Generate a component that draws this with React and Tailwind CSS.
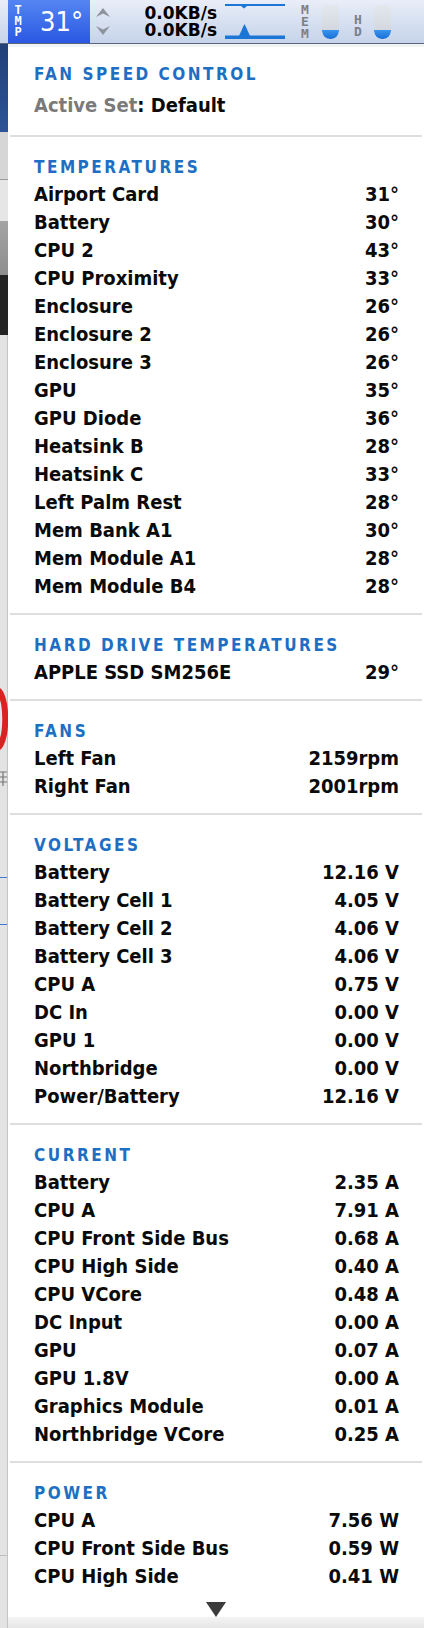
import React from "react";

const sections = [
  {
    title: "TEMPERATURES",
    rows: [
      ["Airport Card", "31°"],
      ["Battery", "30°"],
      ["CPU 2", "43°"],
      ["CPU Proximity", "33°"],
      ["Enclosure", "26°"],
      ["Enclosure 2", "26°"],
      ["Enclosure 3", "26°"],
      ["GPU", "35°"],
      ["GPU Diode", "36°"],
      ["Heatsink B", "28°"],
      ["Heatsink C", "33°"],
      ["Left Palm Rest", "28°"],
      ["Mem Bank A1", "30°"],
      ["Mem Module A1", "28°"],
      ["Mem Module B4", "28°"],
    ],
  },
  {
    title: "HARD DRIVE TEMPERATURES",
    rows: [["APPLE SSD SM256E", "29°"]],
  },
  {
    title: "FANS",
    rows: [
      ["Left Fan", "2159rpm"],
      ["Right Fan", "2001rpm"],
    ],
  },
  {
    title: "VOLTAGES",
    rows: [
      ["Battery", "12.16 V"],
      ["Battery Cell 1", "4.05 V"],
      ["Battery Cell 2", "4.06 V"],
      ["Battery Cell 3", "4.06 V"],
      ["CPU A", "0.75 V"],
      ["DC In", "0.00 V"],
      ["GPU 1", "0.00 V"],
      ["Northbridge", "0.00 V"],
      ["Power/Battery", "12.16 V"],
    ],
  },
  {
    title: "CURRENT",
    rows: [
      ["Battery", "2.35 A"],
      ["CPU A", "7.91 A"],
      ["CPU Front Side Bus", "0.68 A"],
      ["CPU High Side", "0.40 A"],
      ["CPU VCore", "0.48 A"],
      ["DC Input", "0.00 A"],
      ["GPU", "0.07 A"],
      ["GPU 1.8V", "0.00 A"],
      ["Graphics Module", "0.01 A"],
      ["Northbridge VCore", "0.25 A"],
    ],
  },
  {
    title: "POWER",
    rows: [
      ["CPU A", "7.56 W"],
      ["CPU Front Side Bus", "0.59 W"],
      ["CPU High Side", "0.41 W"],
    ],
  },
];

function Gauge() {
  return (
    <div className="w-[17px] h-[34px] rounded-t-[4px] rounded-b-[8px] bg-gradient-to-b from-[#e4e8ee] to-[#cdd2da] flex flex-col justify-end overflow-hidden">
      <div className="h-[9px] rounded-b-[8px] bg-gradient-to-b from-[#3a93ee] to-[#1570d6]"></div>
    </div>
  );
}

function StackedLetters({ letters, className }) {
  return (
    <div className={"flex flex-col items-center font-['DejaVu_Sans_Mono',monospace] font-bold " + className}>
      {letters.map((l, i) => (
        <span key={i}>{l}</span>
      ))}
    </div>
  );
}

function MenuBar() {
  return (
    <div className="h-[44px] flex items-stretch bg-gradient-to-b from-[#e9eef8] to-[#c6d3ea] border-b-[1px] border-[#5a6679]">
      <div className="w-[8px]"></div>

      {/* TMP item */}
      <div className="w-[82px] flex items-center bg-gradient-to-b from-[#5585f2] to-[#2a57e2] text-white">
        <StackedLetters letters={["T", "M", "P"]} className="ml-[6px] w-[8px] text-white text-[12px] leading-[11px]" />
        <span className="ml-[18px] text-[27px] leading-none">31°</span>
      </div>

      {/* up / down arrows */}
      <div className="ml-[6px] w-[14px] flex flex-col justify-center gap-[7px]">
        <svg width="14" height="11" viewBox="0 0 14 11">
          <path d="M0 10 L7 1 L14 10 L7 6.5 Z" fill="#8d939c" />
        </svg>
        <svg width="14" height="11" viewBox="0 0 14 11">
          <path d="M0 1 L7 4.5 L14 1 L7 10 Z" fill="#8d939c" />
        </svg>
      </div>

      {/* network speed */}
      <div className="ml-[32px] w-[75px] flex flex-col justify-center items-end font-['DejaVu_Sans',sans-serif] font-bold text-[17px] leading-[17px] text-black">
        <span>0.0KB/s</span>
        <span>0.0KB/s</span>
      </div>

      {/* network graph */}
      <svg className="ml-[8px]" width="61" height="43" viewBox="0 0 61 43">
        <rect x="0" y="4" width="60" height="2" fill="#1c76d6" />
        <path d="M16 6 L19 8.5 L22 6 Z" fill="#1c76d6" />
        <rect x="0" y="35.5" width="60" height="3.5" fill="#1c76d6" />
        <path d="M14 36 L18 27 L19.5 24 L21 27 L25 36 Z" fill="#1c76d6" />
      </svg>

      {/* MEM */}
      <StackedLetters letters={["M", "E", "M"]} className="ml-[13px] w-[12px] justify-center text-[#7c8086] text-[13px] leading-[12px]" />
      <div className="ml-[11px] flex items-center">
        <Gauge />
      </div>

      {/* HD */}
      <div className="ml-[13px] flex flex-col justify-end pb-[5px]">
        <StackedLetters letters={["H", "D"]} className="w-[12px] text-[#7c8086] text-[13px] leading-[12px]" />
      </div>
      <div className="ml-[10px] flex items-center">
        <Gauge />
      </div>
    </div>
  );
}

function LeftStrip() {
  return (
    <div className="w-[8px] flex flex-col overflow-hidden">
      <div className="h-[88px] bg-gradient-to-b from-[#223f78] to-[#2c5496]"></div>
      <div className="h-[47px] bg-[#d6d6d6]"></div>
      <div className="h-[1px] bg-[#9a9a9a]"></div>
      <div className="h-[41px] bg-[#e6e6e6]"></div>
      <div className="h-[54px] bg-gradient-to-b from-[#a3a3a3] to-[#8f8f8f]"></div>
      <div className="h-[60px] bg-[#242424]"></div>
      <div className="flex-1 flex flex-col bg-[#e3e3e3] border-r-[1px] border-[#c4c4c4]">
        <div className="h-[353px]"></div>
        <svg width="8" height="62" viewBox="0 0 8 62">
          <path d="M0 0 C11 8 11 54 0 62 L0 50 C3 42 3 20 0 12 Z" fill="#d92222" />
        </svg>
        <svg width="8" height="45" viewBox="0 0 8 45">
          <path d="M0 22 H7 M0 27 H7 M0 32 H7 M3 22 V36" stroke="#777" strokeWidth="1.2" fill="none" />
        </svg>
        <div className="h-[82px]"></div>
        <div className="h-[1px] bg-[#3d7ad8]"></div>
        <div className="h-[46px]"></div>
        <div className="h-[1px] bg-[#3d7ad8]"></div>
        <div className="h-[630px]"></div>
        <div className="h-[1px] bg-[#bcbcbc]"></div>
        <div className="flex-1"></div>
      </div>
    </div>
  );
}

function Divider() {
  return (
    <div className="h-[28px] flex items-center px-[2px]">
      <div className="h-[2px] w-full bg-[#dedede]"></div>
    </div>
  );
}

function Heading({ children }) {
  return (
    <div className="h-[30px] flex items-center pt-[5px] pl-[26px] text-[17px] font-bold tracking-[2.5px] text-[#1e6fc3]">
      {children}
    </div>
  );
}

function Row({ label, value }) {
  return (
    <div className="h-[28px] flex items-center justify-between pl-[26px] pr-[25px] text-[20px] font-bold text-[#0a0a0a] leading-[28px]">
      <span>{label}</span>
      <span>{value}</span>
    </div>
  );
}

export default function App() {
  return (
    <div className="w-[424px] h-[1628px] overflow-hidden flex flex-col bg-white font-['DejaVu_Sans_Condensed','DejaVu_Sans',sans-serif]">
      <MenuBar />
      <div className="flex flex-1 min-h-0">
        <LeftStrip />
        <div className="flex-1 flex flex-col bg-white">
          <div className="h-[8px] bg-[#f2f3f5]"></div>

          {/* Fan speed control */}
          <div className="mt-[10px]">
            <Heading>FAN SPEED CONTROL</Heading>
          </div>
          <div className="mt-[4px] mb-[3px] h-[28px] flex items-center pl-[26px] text-[20px] font-bold">
            <span className="text-[#7a7a7a]">Active Set</span>
            <span className="text-[#0a0a0a]">: Default</span>
          </div>

          {sections.map((s) => (
            <div key={s.title}>
              <Divider />
              <Heading>{s.title}</Heading>
              {s.rows.map(([label, value], i) => (
                <Row key={i} label={label} value={value} />
              ))}
            </div>
          ))}

          {/* scroll arrow */}
          <div className="flex-1 flex flex-col">
            <div className="flex-1 flex justify-center pt-[12px]">
              <svg width="20" height="15" viewBox="0 0 20 15">
                <path d="M0 0 L20 0 L10 15 Z" fill="#3b3b3b" />
              </svg>
            </div>
            <div className="h-[11px] bg-gradient-to-b from-[#f4f4f4] to-[#e6e6e6]"></div>
          </div>
        </div>
      </div>
    </div>
  );
}
